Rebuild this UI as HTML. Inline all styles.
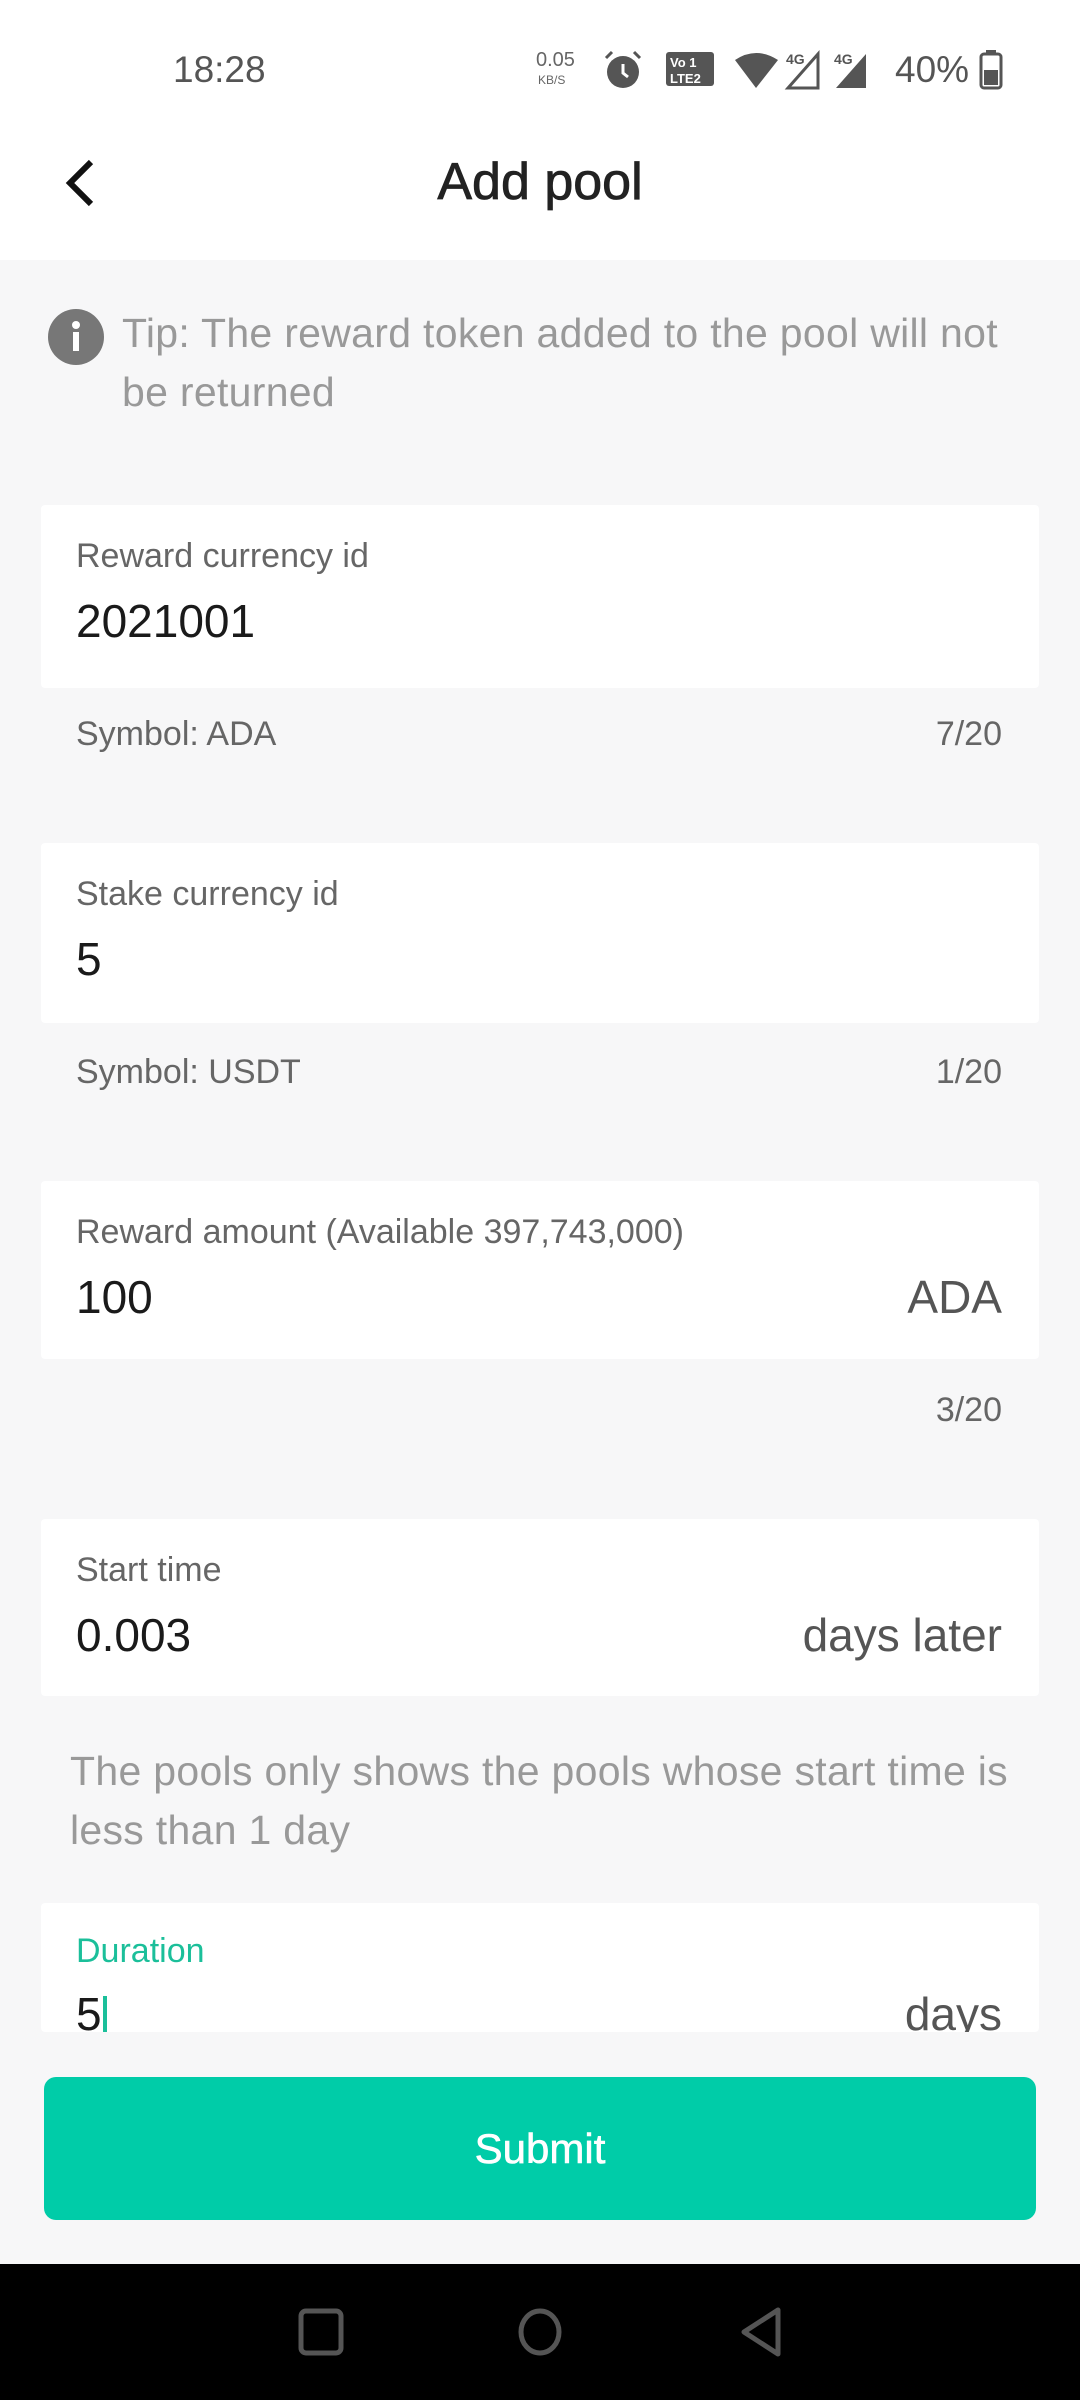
<!DOCTYPE html>
<html><head><meta charset="utf-8"><style>
*{margin:0;padding:0;box-sizing:border-box}
body{width:1080px;height:2400px;background:#f7f7f8;position:relative;overflow:hidden;font-family:"Liberation Sans",sans-serif;}
.t{position:absolute;line-height:1;white-space:nowrap;letter-spacing:0}
.card{position:absolute;left:41px;width:998px;background:#fff;border-radius:4px}
.lab{font-size:34px;color:#666}
.val{font-size:46px;color:#1a1a1a}
.sym{font-size:34px;color:#666}
</style></head><body>
<div style="position:absolute;left:0;top:0;width:1080px;height:260px;background:#fff"></div>
<div class="t" style="left:173px;top:51px;font-size:37px;color:#555">18:28</div>
<div class="t" style="left:536px;top:50px;font-size:20px;color:#666">0.05</div>
<div class="t" style="left:538px;top:74px;font-size:12px;color:#666">KB/S</div>
<svg style="position:absolute;left:600px;top:48px" width="450" height="44" viewBox="0 0 450 44">
<circle cx="23" cy="24" r="16" fill="#555"/><path d="M23 16v9l5 4" stroke="#fff" stroke-width="3" fill="none"/>
<path d="M6 10l6-6M40 10l-6-6" stroke="#555" stroke-width="3"/>
<rect x="66" y="4" width="48" height="34" rx="3" fill="#555"/>
<text x="70" y="19" font-size="13" fill="#fff" font-family="Liberation Sans" font-weight="bold">Vo 1</text>
<text x="70" y="35" font-size="13" fill="#fff" font-family="Liberation Sans" font-weight="bold">LTE2</text>
<path d="M135 12 Q156 -2 178 12 L156 40 Z" fill="#555"/>
<path d="M188 40 L218 6 L218 40 Z" fill="none" stroke="#555" stroke-width="3"/>
<path d="M236 40 L266 6 L266 40 Z" fill="#555"/>
<text x="186" y="16" font-size="14" fill="#555" font-family="Liberation Sans" font-weight="bold">4G</text>
<text x="234" y="16" font-size="14" fill="#555" font-family="Liberation Sans" font-weight="bold">4G</text>
<rect x="381" y="6" width="20" height="34" rx="3" fill="none" stroke="#555" stroke-width="3"/><rect x="384" y="22" width="14" height="15" fill="#555"/><rect x="386" y="2" width="10" height="5" fill="#555"/>
</svg>
<div class="t" style="left:895px;top:51px;font-size:37px;color:#555">40%</div>
<svg style="position:absolute;left:60px;top:158px" width="40" height="50"><path d="M31 4 L10 25 L31 46" stroke="#111" stroke-width="6" fill="none"/></svg>
<div class="t" style="left:0;width:1080px;text-align:center;top:156px;font-size:52px;color:#222;-webkit-text-stroke:0.8px #222">Add pool</div>
<svg style="position:absolute;left:48px;top:309px" width="56" height="56"><circle cx="28" cy="28" r="28" fill="#777"/><circle cx="28" cy="16" r="4" fill="#fff"/><rect x="25" y="23" width="6" height="19" fill="#fff"/></svg>
<div class="t" style="left:122px;top:313px;font-size:41px;color:#999;letter-spacing:0.3px">Tip: The reward token added to the pool will not</div>
<div class="t" style="left:122px;top:372px;font-size:41px;color:#999;letter-spacing:0.3px">be returned</div>

<div class="card" style="top:505px;height:183px"></div>
<div class="t lab" style="left:76px;top:539px">Reward currency id</div>
<div class="t val" style="left:76px;top:598px">2021001</div>
<div class="t sym" style="left:76px;top:717px">Symbol: ADA</div>
<div class="t sym" style="right:78px;top:717px">7/20</div>

<div class="card" style="top:843px;height:180px"></div>
<div class="t lab" style="left:76px;top:877px">Stake currency id</div>
<div class="t val" style="left:76px;top:936px">5</div>
<div class="t sym" style="left:76px;top:1055px">Symbol: USDT</div>
<div class="t sym" style="right:78px;top:1055px">1/20</div>

<div class="card" style="top:1181px;height:178px"></div>
<div class="t lab" style="left:76px;top:1215px">Reward amount (Available 397,743,000)</div>
<div class="t val" style="left:76px;top:1274px">100</div>
<div class="t val" style="right:78px;top:1274px;color:#555">ADA</div>
<div class="t sym" style="right:78px;top:1393px">3/20</div>

<div class="card" style="top:1519px;height:177px"></div>
<div class="t lab" style="left:76px;top:1553px">Start time</div>
<div class="t val" style="left:76px;top:1612px">0.003</div>
<div class="t val" style="right:78px;top:1612px;color:#555">days later</div>
<div class="t" style="left:70px;top:1751px;font-size:41px;color:#999;letter-spacing:0.3px">The pools only shows the pools whose start time is</div>
<div class="t" style="left:70px;top:1810px;font-size:41px;color:#999;letter-spacing:0.3px">less than 1 day</div>

<div class="card" style="top:1903px;height:129px;overflow:hidden">
<div class="t lab" style="left:35px;top:31px;color:#1bbf9a">Duration</div>
<div class="t val" style="left:35px;top:88px">5<span style="display:inline-block;width:4px;height:40px;background:#1bbf9a;vertical-align:-6px;margin-left:1px"></span></div>
<div class="t val" style="right:37px;top:88px;color:#555">days</div>
</div>

<div style="position:absolute;left:44px;top:2077px;width:992px;height:143px;background:#00cca8;border-radius:12px;color:#fff;font-size:42px;text-align:center;line-height:143px;-webkit-text-stroke:0.6px #fff">Submit</div>

<div style="position:absolute;left:0;top:2264px;width:1080px;height:136px;background:#000"></div>
<svg style="position:absolute;left:0;top:2300px" width="1080" height="64">
<rect x="301" y="11" width="40" height="42" rx="5" fill="none" stroke="#555" stroke-width="5"/>
<ellipse cx="540" cy="32" rx="19" ry="21" fill="none" stroke="#555" stroke-width="5"/>
<path d="M778 10 L778 54 L744 32 Z" fill="none" stroke="#555" stroke-width="5" stroke-linejoin="round"/>
</svg>
</body></html>
